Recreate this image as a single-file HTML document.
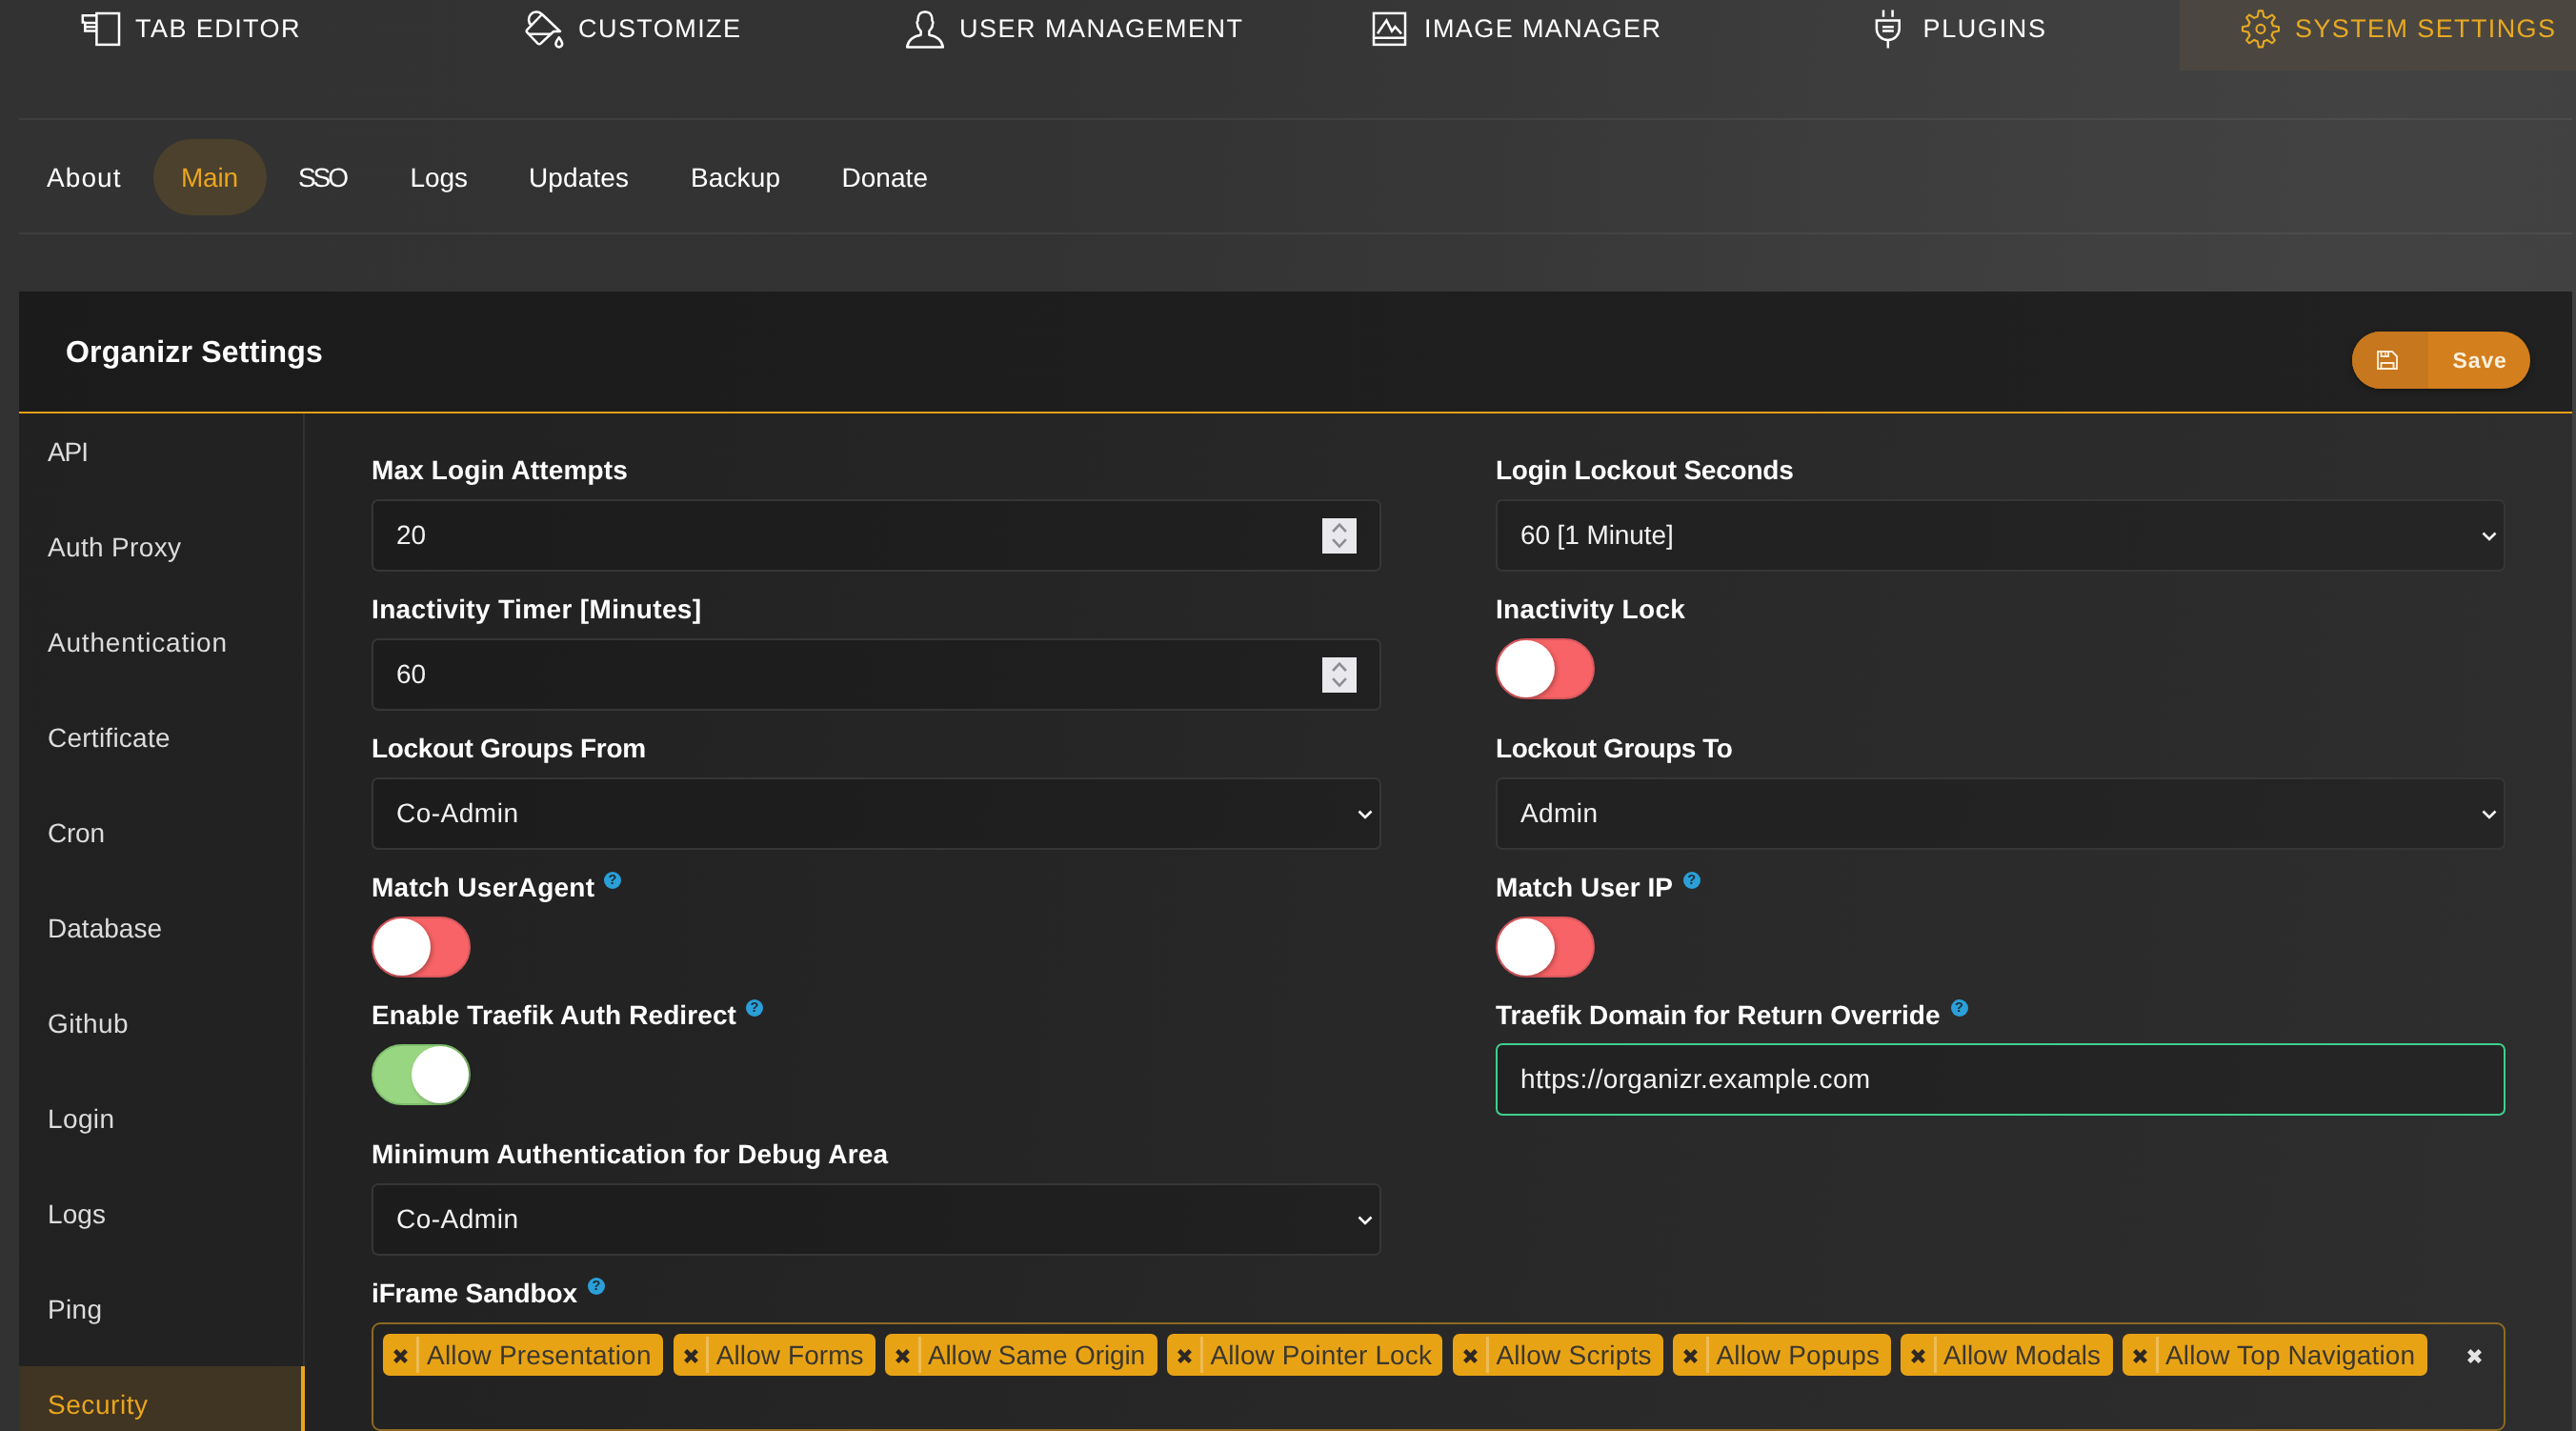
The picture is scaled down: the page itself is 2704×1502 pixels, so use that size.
<!DOCTYPE html>
<html lang="en">
<head>
<meta charset="utf-8">
<title>Organizr Settings</title>
<style>
*{box-sizing:border-box;margin:0;padding:0}
html,body{width:2704px;height:1502px;overflow:hidden}
body{text-rendering:geometricPrecision;font-family:"Liberation Sans",Arial,sans-serif;color:#fff;position:relative;
 background:linear-gradient(94deg,#323232 0%,#333 40%,#373737 55%,#3d3d3d 70%,#424242 88%,#414141 100%);}
#topnav,#subnav,#panel{will-change:transform}
/* top nav */
#topnav{position:absolute;left:0;top:0;width:2704px;height:74px;overflow:hidden}
.tab{position:absolute;top:0;height:74px;width:464px}
.tab.active{background:#4b4740}
.ic{position:absolute;overflow:visible}
.tl span{position:absolute;top:13.3px;line-height:34px;font-size:27px;letter-spacing:2.4px;white-space:nowrap}
.hr{position:absolute;left:20px;width:2680px;height:2px;background:rgba(255,255,255,.06)}
/* sub nav */
#subnav a{position:absolute;top:146px;height:80px;border-radius:40px}
#subnav a.active{background:#4c412c}
.st{position:absolute;top:147px;line-height:80px;font-size:28px;color:#fff;white-space:nowrap}
.st.on{color:#eaa51e}
/* panel */
#panel{position:absolute;left:20px;top:306px;width:2680px;height:1196px;background:linear-gradient(95deg,#212121 0%,#232323 25%,#282828 55%,#2e2e2e 100%);overflow:hidden}
#phead{position:absolute;left:0;top:0;width:2680px;height:128px;background:linear-gradient(90deg,#1b1b1b,#212121);border-bottom:2px solid #e59f17}
#phead h3{position:absolute;left:49px;top:43px;font-size:32px;line-height:40px;font-weight:bold;white-space:nowrap;letter-spacing:0.2px}
#save{position:absolute;left:2449px;top:42px;width:187px;height:60px;border-radius:30px;background:#d47f1d;overflow:hidden;box-shadow:0 2px 6px rgba(0,0,0,.35)}
#save i{position:absolute;left:0;top:0;width:80px;height:60px;background:#c7771d}
#save span{position:absolute;left:105.5px;top:0;line-height:61px;font-size:23px;font-weight:bold;color:#fcf0de;white-space:nowrap;letter-spacing:0.9px}
#save svg{position:absolute;left:25px;top:19px}
#side{position:absolute;left:0;top:128px;width:300px;height:1070px;border-right:2px solid #323232}
#side a{position:absolute;left:0;width:298px;height:80px;line-height:81px;padding-left:30px;font-size:28px;color:#dcdcdc;text-decoration:none;white-space:nowrap}
#side a.active{width:300px;background:#403422;color:#eaa51e;border-right:4px solid #e8a41c}
/* form */
label.l{position:absolute;font-size:28px;font-weight:bold;line-height:34px;white-space:nowrap;color:#fff}
.inp{position:absolute;width:1060px;height:76px;border:2px solid #363636;border-radius:7px;background:rgba(0,0,0,.17);font-size:28px;line-height:72px;padding-left:24px;color:#f2f2f2;white-space:nowrap}
.inp.ok{border-color:#3fcf8e}
.chev{position:absolute;right:6px;top:31px}
.spin{position:absolute;left:996px;top:18px;width:36px;height:36.5px;background:#e9e9ed;line-height:0}
.tog{position:absolute;width:104px;height:64px;border-radius:32px;background:#f76366;border:2px solid #d9585d}
.tog b{position:absolute;left:0;top:0;width:60px;height:60px;border-radius:30px;background:#fff;box-shadow:2px 2px 4px rgba(0,0,0,.25)}
.tog.on{background:#98d682;border-color:#7fc06c}
.tog.on b{left:40px}
.help{position:absolute;width:18px;height:18px;border-radius:50%;background:#2a9fd8;color:#1d2a33;font-size:14.5px;font-weight:bold;line-height:18.5px;text-align:center}
#tags{position:absolute;width:2240px;height:114px;border:2px solid #8c6a22;border-radius:9px}
.tag{position:absolute;top:10px;height:44px;border-radius:7px;background:#e8a315;color:#3b372e;font-size:28px;line-height:46px;white-space:nowrap}
.tag i{position:absolute;left:0;top:0;width:38px;height:44px;text-decoration:none}
.tag i:after{content:"";position:absolute;left:34.5px;top:3px;width:3px;height:38px;background:rgba(255,255,255,.27)}
.tag span{position:absolute;top:0}
</style>
</head>
<body>
<div id="topnav">
<div class="tab" style="left:-32px"></div>
<div class="tl" style="color:#fff"><svg class="ic" style="left:80px;top:8px" width="52" height="46" viewBox="80 8 52 46" fill="none" stroke="currentColor" stroke-width="2.5" stroke-linejoin="miter"><rect x="101.4" y="14" width="23.6" height="32.9"/><path d="M101.4,16.2H86.8V23.6H89.3M101.4,24H89.3V32.6H101.4M89.3,28.2H101.4"/></svg><span style="left:142px;letter-spacing:1.44px">TAB EDITOR</span></div>
<div class="tab" style="left:432px"></div>
<div class="tl" style="color:#fff"><svg class="ic" style="left:545px;top:8px" width="52" height="46" viewBox="545 8 52 46" fill="none" stroke="currentColor" stroke-width="2.5" stroke-linejoin="round" stroke-linecap="round"><path d="M569,15L588,33H581.2L567.6,45.6Q566,47 564.4,45.6L553.4,34.2Q552,32.6 553.4,31.2Z"/><path d="M555.5,35.8H578"/><path d="M557.6,26.5A6.6,6.6 0 1 1 568.5,14.6"/><path d="M586.8,39.2C585,42 583.4,44.2 583.4,46a3.4,3.4 0 0 0 6.8,0C590.2,44.2 588.6,42 586.8,39.2Z"/></svg><span style="left:607px;letter-spacing:1.44px">CUSTOMIZE</span></div>
<div class="tab" style="left:896px"></div>
<div class="tl" style="color:#fff"><svg class="ic" style="left:945px;top:6px" width="52" height="50" viewBox="945 6 52 50" fill="none" stroke="currentColor" stroke-width="2.5" stroke-linejoin="round"><path d="M952.2,49.6C953,42.5 959,38.2 966.6,36.8V32.6C964,29.8 962.8,27.8 963.2,25.6C962.3,24.6 962.6,22.6 963.4,22C963.2,15.6 966,12.4 971,12.4C976,12.4 978.8,15.6 978.6,22C979.4,22.6 979.7,24.6 978.8,25.6C979.2,27.8 978,29.8 975.4,32.6V36.8C983,38.2 989,42.5 989.8,49.6Z"/></svg><span style="left:1007px;letter-spacing:1.5px">USER MANAGEMENT</span></div>
<div class="tab" style="left:1360px"></div>
<div class="tl" style="color:#fff"><svg class="ic" style="left:1435px;top:8px" width="48" height="46" viewBox="1435 8 48 46" fill="none" stroke="currentColor" stroke-width="2.5"><rect x="1442" y="13.9" width="33" height="33"/><path d="M1442,39.8H1475"/><path d="M1446,35.3L1455.4,21.4L1461,32.6L1464.5,28.2L1471,35.4"/></svg><span style="left:1495px;letter-spacing:1.41px">IMAGE MANAGER</span></div>
<div class="tab" style="left:1824px"></div>
<div class="tl" style="color:#fff"><svg class="ic" style="left:1960px;top:6px" width="44" height="50" viewBox="1960 6 44 50" fill="none" stroke="currentColor" stroke-width="2.5"><path d="M1977,10.6V17.8M1986.6,10.6V17.8"/><path d="M1968.6,21.4H1995M1969.9,21.4V30.2A11.9,11.9 0 0 0 1993.7,30.2V21.4"/><path d="M1976,28.3H1987.8M1976,32.6H1987.8M1981.8,42.5V50.6"/></svg><span style="left:2018.5px;letter-spacing:1.66px">PLUGINS</span></div>
<div class="tab active" style="left:2288px"></div>
<div class="tl" style="color:#e8a923"><svg class="ic" style="left:2348px;top:6px" width="50" height="50" viewBox="2348 6 50 50" fill="none" stroke="currentColor" stroke-width="2.1" stroke-linejoin="round"><path d="M2369.67,17.52L2370.94,11.41L2375.06,11.41L2376.33,17.52A13.30,13.30 0 0 1 2379.75,18.94L2379.75,18.94L2384.97,15.51L2387.89,18.43L2384.46,23.65A13.30,13.30 0 0 1 2385.88,27.07L2385.88,27.07L2391.99,28.34L2391.99,32.46L2385.88,33.73A13.30,13.30 0 0 1 2384.46,37.15L2384.46,37.15L2387.89,42.37L2384.97,45.29L2379.75,41.86A13.30,13.30 0 0 1 2376.33,43.28L2376.33,43.28L2375.06,49.39L2370.94,49.39L2369.67,43.28A13.30,13.30 0 0 1 2366.25,41.86L2366.25,41.86L2361.03,45.29L2358.11,42.37L2361.54,37.15A13.30,13.30 0 0 1 2360.12,33.73L2360.12,33.73L2354.01,32.46L2354.01,28.34L2360.12,27.07A13.30,13.30 0 0 1 2361.54,23.65L2361.54,23.65L2358.11,18.43L2361.03,15.51L2366.25,18.94A13.30,13.30 0 0 1 2369.67,17.52Z"/><circle cx="2373" cy="30.4" r="4.5"/></svg><span style="left:2409px;letter-spacing:1.39px">SYSTEM SETTINGS</span></div>

</div>
<div class="hr" style="top:124px"></div>
<div class="hr" style="top:244px"></div>
<div id="subnav">
<a class="" style="left:20px;width:136px"></a><span class="st" style="left:49px;letter-spacing:1.08px">About</span>
<a class="active" style="left:161px;width:119px"></a><span class="st on" style="left:190px;letter-spacing:-0.23px">Main</span>
<a class="" style="left:284px;width:112px"></a><span class="st" style="left:313px;letter-spacing:-3.07px">SSO</span>
<a class="" style="left:401px;width:120px"></a><span class="st" style="left:430.5px;letter-spacing:-0.07px">Logs</span>
<a class="" style="left:526px;width:164px"></a><span class="st" style="left:555px;letter-spacing:0.12px">Updates</span>
<a class="" style="left:696px;width:153px"></a><span class="st" style="left:725px;letter-spacing:0.12px">Backup</span>
<a class="" style="left:854px;width:150px"></a><span class="st" style="left:883.5px;letter-spacing:0.04px">Donate</span>

</div>
<div id="panel">
 <div id="phead"><h3>Organizr Settings</h3>
  <div id="save"><i></i><svg width="24" height="22" viewBox="0 0 24 22" fill="none" stroke="#fcecd6" stroke-width="1.9"><path d="M2,2H17L22,7V20H2Z"/><path d="M5.5,2V7H13V2M10,3.5V5.5M5.5,20V14H18.5V20"/></svg><span>Save</span></div>
 </div>
 <div id="side">
<a class="" style="top:0px"><span style="letter-spacing:-1.07px">API</span></a>
<a class="" style="top:100px"><span style="letter-spacing:0.34px">Auth Proxy</span></a>
<a class="" style="top:200px"><span style="letter-spacing:0.81px">Authentication</span></a>
<a class="" style="top:300px"><span style="letter-spacing:0.25px">Certificate</span></a>
<a class="" style="top:400px"><span style="letter-spacing:-0.23px">Cron</span></a>
<a class="" style="top:500px"><span style="letter-spacing:0.02px">Database</span></a>
<a class="" style="top:600px"><span style="letter-spacing:0.4px">Github</span></a>
<a class="" style="top:700px"><span style="letter-spacing:0.37px">Login</span></a>
<a class="" style="top:800px"><span style="letter-spacing:0.09px">Logs</span></a>
<a class="" style="top:900px"><span style="letter-spacing:0.32px">Ping</span></a>
<a class="active" style="top:1000px"><span style="letter-spacing:0.55px">Security</span></a>

</div>
<label class="l" style="left:370px;top:171px;letter-spacing:0.13px">Max Login Attempts</label>
<div class="inp " style="left:370px;top:218px"><span style="letter-spacing:0px">20</span><span class="spin"><svg width="36" height="36" viewBox="0 0 36 36"><path d="M11.1,14L18,6.6L24.9,14M11.1,22.2L18,29.6L24.9,22.2" fill="none" stroke="#8c8c94" stroke-width="2.6"/></svg></span></div>
<label class="l" style="left:1550px;top:171px;letter-spacing:-0.23px">Login Lockout Seconds</label>
<div class="inp " style="left:1550px;top:218px"><span style="letter-spacing:-0.1px">60 [1 Minute]</span><svg class="chev" width="18" height="12" viewBox="0 0 18 12"><path d="M2.5,2.5L9,9L15.5,2.5" fill="none" stroke="#fff" stroke-width="2.6"/></svg></div>
<label class="l" style="left:370px;top:317px;letter-spacing:0.36px">Inactivity Timer [Minutes]</label>
<div class="inp " style="left:370px;top:364px"><span style="letter-spacing:0px">60</span><span class="spin"><svg width="36" height="36" viewBox="0 0 36 36"><path d="M11.1,14L18,6.6L24.9,14M11.1,22.2L18,29.6L24.9,22.2" fill="none" stroke="#8c8c94" stroke-width="2.6"/></svg></span></div>
<label class="l" style="left:1550px;top:317px;letter-spacing:0.31px">Inactivity Lock</label>
<div class="tog" style="left:1549.5px;top:364px"><b></b></div>
<label class="l" style="left:370px;top:463px;letter-spacing:-0.33px">Lockout Groups From</label>
<div class="inp " style="left:370px;top:510px"><span style="letter-spacing:0.5px">Co-Admin</span><svg class="chev" width="18" height="12" viewBox="0 0 18 12"><path d="M2.5,2.5L9,9L15.5,2.5" fill="none" stroke="#fff" stroke-width="2.6"/></svg></div>
<label class="l" style="left:1550px;top:463px;letter-spacing:-0.45px">Lockout Groups To</label>
<div class="inp " style="left:1550px;top:510px"><span style="letter-spacing:0.41px">Admin</span><svg class="chev" width="18" height="12" viewBox="0 0 18 12"><path d="M2.5,2.5L9,9L15.5,2.5" fill="none" stroke="#fff" stroke-width="2.6"/></svg></div>
<label class="l" style="left:370px;top:608.5px;letter-spacing:0.27px">Match UserAgent</label>
<span class="help" style="left:614px;top:608.5px">?</span>
<div class="tog" style="left:370px;top:656px"><b></b></div>
<label class="l" style="left:1550px;top:608.5px;letter-spacing:0.07px">Match User IP</label>
<span class="help" style="left:1746.7px;top:608.5px">?</span>
<div class="tog" style="left:1549.5px;top:656px"><b></b></div>
<label class="l" style="left:370px;top:742.5px;letter-spacing:0.1px">Enable Traefik Auth Redirect</label>
<span class="help" style="left:763px;top:742.5px">?</span>
<div class="tog on" style="left:370px;top:790px"><b></b></div>
<label class="l" style="left:1550px;top:742.5px;letter-spacing:-0.01px">Traefik Domain for Return Override</label>
<span class="help" style="left:2027.5px;top:742.5px">?</span>
<div class="inp ok" style="left:1550px;top:789px"><span style="letter-spacing:0.34px">https://organizr.example.com</span></div>
<label class="l" style="left:370px;top:889px;letter-spacing:0.21px">Minimum Authentication for Debug Area</label>
<div class="inp " style="left:370px;top:936px"><span style="letter-spacing:0.5px">Co-Admin</span><svg class="chev" width="18" height="12" viewBox="0 0 18 12"><path d="M2.5,2.5L9,9L15.5,2.5" fill="none" stroke="#fff" stroke-width="2.6"/></svg></div>
<label class="l" style="left:370px;top:1034.5px;letter-spacing:-0.14px">iFrame Sandbox</label>
<span class="help" style="left:597px;top:1034.5px">?</span>
<div id="tags" style="left:370px;top:1082px">
<div class="tag" style="left:10px;width:294px"><i><svg width="15" height="15" viewBox="0 0 15 15" style="position:absolute;left:11px;top:16px"><path d="M1.7,1.7L13.3,13.3M13.3,1.7L1.7,13.3" stroke="#2d2823" stroke-width="4.6" fill="none"/></svg></i><span style="left:46px;letter-spacing:0.21px">Allow Presentation</span></div>
<div class="tag" style="left:314.5px;width:212.1px"><i><svg width="15" height="15" viewBox="0 0 15 15" style="position:absolute;left:11px;top:16px"><path d="M1.7,1.7L13.3,13.3M13.3,1.7L1.7,13.3" stroke="#2d2823" stroke-width="4.6" fill="none"/></svg></i><span style="left:45.3px;letter-spacing:0.08px">Allow Forms</span></div>
<div class="tag" style="left:537px;width:285.7px"><i><svg width="15" height="15" viewBox="0 0 15 15" style="position:absolute;left:11px;top:16px"><path d="M1.7,1.7L13.3,13.3M13.3,1.7L1.7,13.3" stroke="#2d2823" stroke-width="4.6" fill="none"/></svg></i><span style="left:45px;letter-spacing:-0.14px">Allow Same Origin</span></div>
<div class="tag" style="left:833px;width:289px"><i><svg width="15" height="15" viewBox="0 0 15 15" style="position:absolute;left:11px;top:16px"><path d="M1.7,1.7L13.3,13.3M13.3,1.7L1.7,13.3" stroke="#2d2823" stroke-width="4.6" fill="none"/></svg></i><span style="left:45.4px;letter-spacing:0.13px">Allow Pointer Lock</span></div>
<div class="tag" style="left:1133px;width:220.7px"><i><svg width="15" height="15" viewBox="0 0 15 15" style="position:absolute;left:11px;top:16px"><path d="M1.7,1.7L13.3,13.3M13.3,1.7L1.7,13.3" stroke="#2d2823" stroke-width="4.6" fill="none"/></svg></i><span style="left:45.4px;letter-spacing:0.24px">Allow Scripts</span></div>
<div class="tag" style="left:1364px;width:228.5px"><i><svg width="15" height="15" viewBox="0 0 15 15" style="position:absolute;left:11px;top:16px"><path d="M1.7,1.7L13.3,13.3M13.3,1.7L1.7,13.3" stroke="#2d2823" stroke-width="4.6" fill="none"/></svg></i><span style="left:45.4px;letter-spacing:0.18px">Allow Popups</span></div>
<div class="tag" style="left:1603px;width:222.6px"><i><svg width="15" height="15" viewBox="0 0 15 15" style="position:absolute;left:11px;top:16px"><path d="M1.7,1.7L13.3,13.3M13.3,1.7L1.7,13.3" stroke="#2d2823" stroke-width="4.6" fill="none"/></svg></i><span style="left:45px;letter-spacing:0px">Allow Modals</span></div>
<div class="tag" style="left:1836px;width:319.8px"><i><svg width="15" height="15" viewBox="0 0 15 15" style="position:absolute;left:11px;top:16px"><path d="M1.7,1.7L13.3,13.3M13.3,1.7L1.7,13.3" stroke="#2d2823" stroke-width="4.6" fill="none"/></svg></i><span style="left:45px;letter-spacing:0.14px">Allow Top Navigation</span></div>
<svg width="15" height="15" viewBox="0 0 15 15" style="position:absolute;left:2198px;top:26px"><path d="M1.7,1.7L13.3,13.3M13.3,1.7L1.7,13.3" stroke="#e4e4e4" stroke-width="4.8" fill="none"/></svg></div>
</div>
</body>
</html>
